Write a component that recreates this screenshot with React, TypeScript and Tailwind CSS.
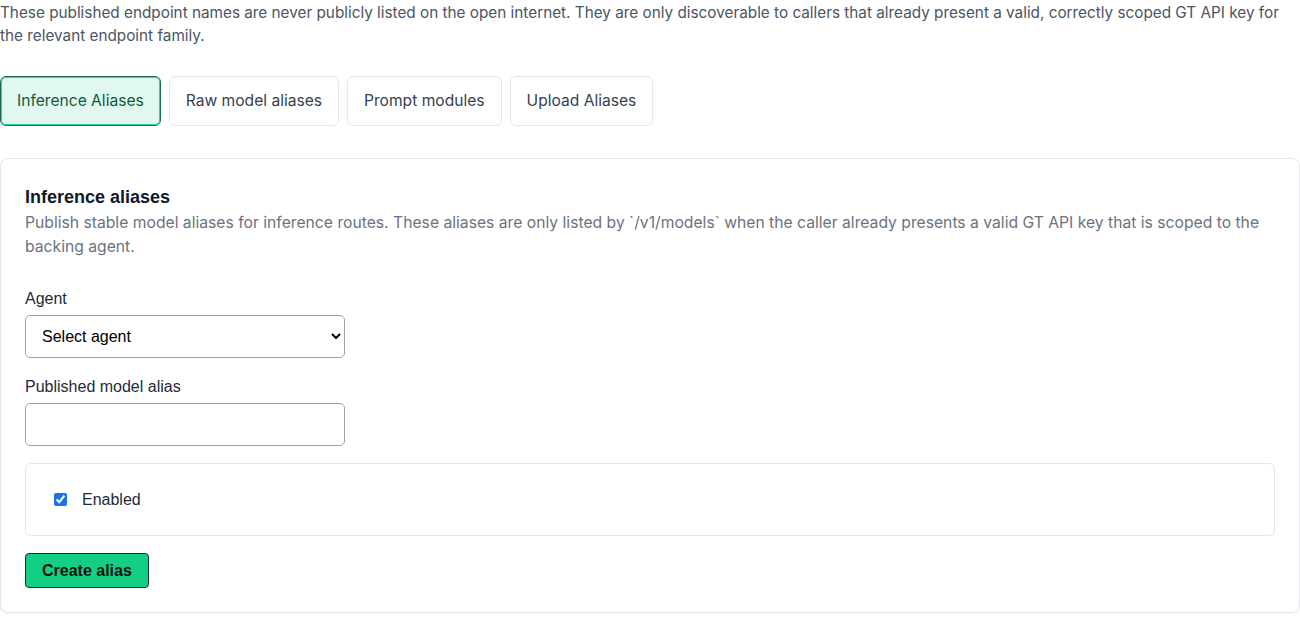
import { useState } from "react";

const tabs = ["Inference Aliases", "Raw model aliases", "Prompt modules", "Upload Aliases"];

export default function App() {
  const [active, setActive] = useState(0);
  const [enabled, setEnabled] = useState(true);

  return (
    <div className="min-h-screen bg-white font-['Inter',sans-serif]">
      <p className="pt-[1px] text-[15.3px] leading-[23px] text-[#4b5563]">
        These published endpoint names are never publicly listed on the open internet. They are only discoverable to
        callers that already present a valid, correctly scoped GT API key for the relevant endpoint family.
      </p>

      <div className="mt-[29px] flex gap-2">
        {tabs.map((t, i) => (
          <button
            key={t}
            onClick={() => setActive(i)}
            className={
              i === active
                ? "h-[50px] rounded-md border border-[#1d6b4c] bg-[#e0f8ef] px-4 text-[15.6px] text-[#0f5a3e] shadow-[inset_0_0_0_1px_#34d399]"
                : "h-[50px] rounded-md border border-[#e5e7eb] bg-white px-4 text-[15.6px] text-[#374151]"
            }
          >
            {t}
          </button>
        ))}
      </div>

      <div className="mt-[32px] rounded-lg border border-[#e5e7eb] bg-white px-6 pb-6 pt-[27px] shadow-[0_1px_2px_rgba(0,0,0,0.05)]">
        <h2 className="font-['Liberation_Sans',Arial,sans-serif] text-[18px] font-bold leading-[22px] text-[#111827]">
          Inference aliases
        </h2>
        <p className="mt-[3px] text-[15.7px] leading-[24px] text-[#6b7280]">
          Publish stable model aliases for inference routes. These aliases are only listed by `/v1/models` when the
          caller already presents a valid GT API key that is scoped to the backing agent.
        </p>

        <div className="mt-[30px] font-['Liberation_Sans',Arial,sans-serif]">
          <label className="block text-[16px] leading-[20px] text-[#1f2937]">Agent</label>
          <select className="mt-[6px] h-[43px] w-[320px] rounded-[5px] border border-[#9ca3af] bg-white px-3 text-[16px] text-black">
            <option>Select agent</option>
          </select>

          <label className="mt-[19px] block text-[16px] leading-[20px] text-[#1f2937]">Published model alias</label>
          <input className="mt-[6px] block h-[43px] w-[320px] rounded-[5px] border border-[#9ca3af] px-3 text-[16px]" />

          <div className="mt-[17px] flex h-[73px] items-center rounded-md border border-[#e5e7eb] pl-[28px]">
            <label className="flex items-center gap-[15px] text-[16px] text-[#1f2937]">
              <input
                type="checkbox"
                checked={enabled}
                onChange={(e) => setEnabled(e.target.checked)}
                className="h-[13px] w-[13px] accent-[#1a73e8]"
              />
              Enabled
            </label>
          </div>

          <button className="mt-[17px] h-[35px] rounded-[4px] border border-[#1f2937] bg-[#13cf84] px-4 text-[16px] font-bold text-[#111]">
            Create alias
          </button>
        </div>
      </div>
    </div>
  );
}
